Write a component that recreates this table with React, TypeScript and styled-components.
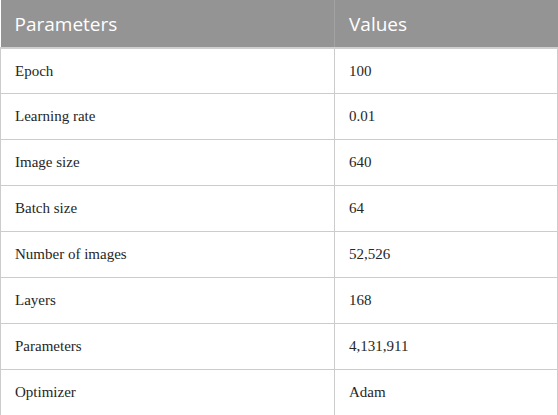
import React from "react";
import styled, { createGlobalStyle } from "styled-components";

const Global = createGlobalStyle`
  html, body { margin: 0; padding: 0; background: #ffffff; }
`;

const Table = styled.table`
  width: 558px;
  height: 415px;
  border-collapse: collapse;
  table-layout: fixed;
`;

const HeadCell = styled.th`
  height: 48px;
  box-sizing: border-box;
  background: #949494;
  color: #ffffff;
  font-family: "Open Sans", "Noto Sans", sans-serif;
  font-weight: 400;
  font-size: 19px;
  text-align: left;
  padding: 0 14px;
  border-left: 1px solid #a3a3a3;
  border-bottom: 2px solid #cfcfcf;
  vertical-align: middle;
  &:first-child { border-left: none; }
`;

const Cell = styled.td`
  box-sizing: border-box;
  font-family: "Liberation Serif", "Times New Roman", serif;
  font-size: 15px;
  color: #262626;
  padding: 0 14px;
  border: 1.5px solid #cccccc;
  border-top: none;
  vertical-align: middle;
`;

const Row = styled.tr`
  height: 45.875px;
`;

const rows: [string, string][] = [
  ["Epoch", "100"],
  ["Learning rate", "0.01"],
  ["Image size", "640"],
  ["Batch size", "64"],
  ["Number of images", "52,526"],
  ["Layers", "168"],
  ["Parameters", "4,131,911"],
  ["Optimizer", "Adam"],
];

export default function App() {
  return (
    <>
      <Global />
      <Table>
        <colgroup>
          <col style={{ width: "334px" }} />
          <col />
        </colgroup>
        <thead>
          <tr>
            <HeadCell>Parameters</HeadCell>
            <HeadCell>Values</HeadCell>
          </tr>
        </thead>
        <tbody>
          {rows.map(([k, v]) => (
            <Row key={k}>
              <Cell>{k}</Cell>
              <Cell>{v}</Cell>
            </Row>
          ))}
        </tbody>
      </Table>
    </>
  );
}
